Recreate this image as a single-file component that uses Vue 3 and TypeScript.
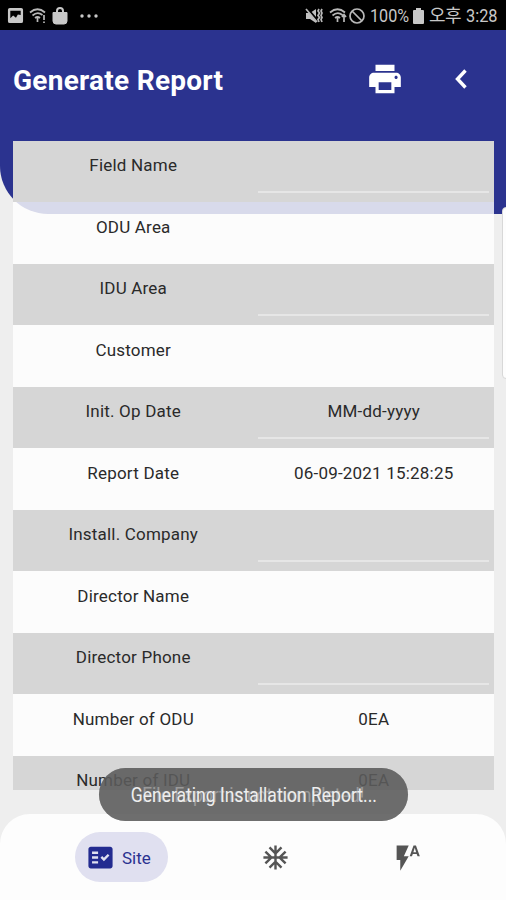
<script setup lang="ts">
interface ReportRow {
  label: string
  value?: string
  editable?: boolean
}

const rows: ReportRow[] = [
  { label: 'Field Name', editable: true },
  { label: 'ODU Area' },
  { label: 'IDU Area', editable: true },
  { label: 'Customer' },
  { label: 'Init. Op Date', value: 'MM-dd-yyyy', editable: true },
  { label: 'Report Date', value: '06-09-2021 15:28:25' },
  { label: 'Install. Company', editable: true },
  { label: 'Director Name' },
  { label: 'Director Phone', editable: true },
  { label: 'Number of ODU', value: '0EA' },
  { label: 'Number of IDU', value: '0EA' },
]
</script>

<template>
  <div class="screen">
    <div class="status">
      <div class="status-left">
        <svg class="i-image" viewBox="0 0 18 18"><path fill-rule="evenodd" d="M3 1h12a2 2 0 0 1 2 2v12a2 2 0 0 1-2 2H3a2 2 0 0 1-2-2V3a2 2 0 0 1 2-2zM3.500 4v8l3-3 3 2.500 2-3.500 3 .5V4z" /></svg>
        <svg class="i-wifi" viewBox="0 0 18 18"><path d="M1 5.500Q8.500-1 16 5.500M3.500 8.500Q8.500 4 13.500 8M6 11Q8.500 9 11 11M8.500 11v4M15 8v5M15 14.500v1.500" /></svg>
        <svg class="i-bag" viewBox="0 0 16 18"><path class="solid" d="M1 5.500h14v8.500a3 3 0 0 1-3 3H4a3 3 0 0 1-3-3z" /><path d="M5 6V4a3 3 0 0 1 6 0v2" /></svg>
        <svg class="i-dots" viewBox="0 0 18 4"><circle cx="2" cy="2" r="1.700" /><circle cx="9" cy="2" r="1.700" /><circle cx="16" cy="2" r="1.700" /></svg>
      </div>
      <div class="status-right">
        <svg class="i-mute" viewBox="0 0 18 18"><path class="solid" d="M1 6h4l6-4v14l-6-4H1z" /><path class="cut" d="M2 1l11 13" /><path d="M1 2l11 13M14 2l-1 2 1.500 2-1.500 2.500 1.500 2-1.500 2 1 2.500M17 2l-1 2 1 2-1 2.500 1 2-1 2 1 2.500" /></svg>
        <svg class="i-wifi2" viewBox="0 0 18 18"><path d="M1 5.500Q8.500-1 16 5.500M3.500 8.500Q8.500 4 13.500 8M6 11Q8.500 9 11 11M8.500 11v4M15 8v7M13 10l2-2.500 2 2.500" /></svg>
        <svg class="i-block" viewBox="0 0 18 18"><circle cx="9" cy="9" r="7" /><path d="M4 4l10 10" /></svg>
        <span class="pct">100%</span>
        <svg class="i-bat" viewBox="0 0 11 16"><path d="M3 0h5v2h2a1 1 0 0 1 1 1v12a1 1 0 0 1-1 1H1a1 1 0 0 1-1-1V3a1 1 0 0 1 1-1h2z" /></svg>
        <span class="ampm">오후</span>
        <span class="time">3:28</span>
      </div>
    </div>

    <div class="backdrop"></div>
    <header class="bar">
      <h1>Generate Report</h1>
      <svg class="printer" viewBox="0 0 24 24"><path d="M19 8H5c-1.660 0-3 1.340-3 3v6h4v4h12v-4h4v-6c0-1.660-1.340-3-3-3zm-3 11H8v-5h8v5zm3-7c-.550 0-1-.450-1-1s.450-1 1-1 1 .450 1 1-.450 1-1 1zm-1-9H6v4h12V3z" /></svg>
      <svg class="back" viewBox="0 0 12 20"><path d="M10.500 1.500L2.500 10l8 8.500" /></svg>
    </header>

    <main class="table">
      <div v-for="row in rows" :key="row.label" class="row">
        <div class="cell">{{ row.label }}</div>
        <div class="cell" :class="{ editable: row.editable }">{{ row.value }}</div>
      </div>
    </main>

    <nav class="nav">
      <div class="tab active">
        <svg viewBox="0 0 24 24"><path fill-rule="evenodd" d="M20 3H4c-1.100 0-2 .9-2 2v14c0 1.100.9 2 2 2h16c1.100 0 2-.9 2-2V5c0-1.100-.9-2-2-2zM10 17H5v-2h5v2zm0-4H5v-2h5v2zm0-4H5V7h5v2zm4.820 6L12 12.160l1.410-1.410 1.410 1.420L17.990 9l1.420 1.420L14.820 15z" /></svg>
        <span>Site</span>
      </div>
      <div class="tab flake">
        <svg viewBox="0 0 24 24"><path d="M22 11h-4.170l3.240-3.240-1.410-1.420L15 11h-2V9l4.660-4.660-1.420-1.410L13 6.170V2h-2v4.170L7.760 2.930 6.340 4.340 11 9v2H9L4.340 6.340 2.930 7.760 6.170 11H2v2h4.170l-3.240 3.240 1.410 1.420L9 13h2v2l-4.660 4.660 1.420 1.410L11 17.830V22h2v-4.170l3.240 3.240 1.420-1.410L13 15v-2h2l4.660 4.660 1.410-1.420L17.830 13H22z" /></svg>
      </div>
      <div class="tab flash">
        <svg viewBox="0 0 24 24"><path d="M3 2v12h3v9l7-12H9l4-9H3zm16 0h-2l-3.200 9h1.900l.7-2h3.200l.7 2h1.900L19 2zm-2.150 5.650L18 4l1.150 3.650h-2.300z" /></svg>
      </div>
    </nav>

    <div class="edge"></div>
    <div class="toast previous"><span>File Export is not completed!</span></div>
    <div class="toast current"><span>Generating Installation Report...</span></div>
  </div>
</template>

<style>
body {
  margin: 0;
}
</style>

<style scoped>
.screen {
  position: relative;
  width: 506px;
  height: 900px;
  overflow: hidden;
  display: flex;
  flex-direction: column;
  background: #eeeeee;
  font-family: Roboto, "Noto Sans CJK KR", sans-serif;
  color: #2a2a2a;
}
svg {
  display: block;
  flex: none;
}
.status {
  height: 30px;
  flex: none;
  box-sizing: border-box;
  background: #000;
  color: #c8c8c8;
  display: flex;
  justify-content: space-between;
  padding: 0 8px 0 7px;
}
.status-left,
.status-right {
  display: flex;
  align-items: center;
  padding-top: 1px;
}
.status svg {
  fill: #c8c8c8;
}
.i-image { width: 17px; height: 17px; }
.status .i-wifi,
.status .i-wifi2,
.status .i-block,
.status .i-mute {
  fill: none;
  stroke: #b8b8b8;
  stroke-width: 1.700;
}
.i-wifi { width: 18px; height: 18px; margin-left: 5px; }
.i-bag { width: 16px; height: 18px; margin-left: 5px; stroke: #c8c8c8; }
.i-bag path:last-child { fill: none; stroke-width: 2; }
.i-dots { width: 18px; height: 4px; margin-left: 12px; }
.i-mute { width: 18px; height: 18px; }
.i-mute .solid { fill: #c0c0c0; stroke: none; }
.i-mute .cut { stroke: #000; stroke-width: 2; }
.i-wifi2 { width: 18px; height: 18px; margin-left: 6px; }
.i-block { width: 18px; height: 18px; margin-left: 1px; }
.pct,
.time {
  font-size: 19px;
  transform-origin: left center;
  white-space: nowrap;
}
.pct { width: 40px; margin-left: 4px; transform: scaleX(0.850); }
.i-bat { width: 11px; height: 16px; margin-left: 3px; }
.ampm { width: 32px; margin-left: 5px; font-size: 18px; line-height: 20px; letter-spacing: -0.500px; white-space: nowrap; }
.time { width: 32px; margin-left: 5px; transform: scaleX(0.860); }

.backdrop {
  position: absolute;
  left: 0;
  top: 30px;
  width: 506px;
  height: 184px;
  background: #2b338f;
  border-bottom-left-radius: 48px;
}
.bar {
  position: relative;
  height: 110.500px;
  flex: none;
  box-sizing: border-box;
  display: flex;
  padding: 0 39px 0 13px;
  color: #fff;
}
h1 {
  flex: 1;
  margin: 34px 0 0;
  font-size: 28px;
  line-height: 33px;
  font-weight: 700;
  letter-spacing: 0.260px;
}
.printer { width: 38px; height: 38px; margin: 30px 51px 0 0; fill: #fff; }
.back { width: 12px; height: 20px; margin-top: 39px; fill: none; stroke: #fff; stroke-width: 3.400; }

.table {
  position: relative;
  height: 649.500px;
  flex: none;
  margin: 0 12px 0 13px;
  overflow: hidden;
}
.row {
  height: 61.550px;
  display: grid;
  grid-template-columns: 1fr 1fr;
  background: #d6d6d6;
}
.row:nth-child(even) {
  background: rgba(255, 255, 255, 0.820);
}
.cell {
  position: relative;
  padding-top: 14.500px;
  text-align: center;
  font-size: 17px;
  line-height: 20px;
  letter-spacing: 0.200px;
  white-space: nowrap;
}
.editable::after {
  content: '';
  position: absolute;
  left: 4px;
  right: 5px;
  top: 50px;
  height: 2px;
  background: #e6e6e6;
}

.nav {
  position: relative;
  height: 86px;
  flex: none;
  box-sizing: border-box;
  margin-top: auto;
  padding: 18px 0 0 75px;
  display: flex;
  background: #fdfdfd;
  border-radius: 30px 30px 0 0;
}
.tab {
  height: 50px;
  display: flex;
  align-items: center;
}
.tab svg { width: 29px; height: 29px; fill: #555; }
.tab.active {
  width: 93px;
  box-sizing: border-box;
  padding-left: 11px;
  border-radius: 25px;
  background: #e0e0f0;
  color: #2b3290;
  font-size: 17px;
}
.active svg { margin-right: 7px; fill: #232b90; }
.active span { padding-top: 1px; }
.flake { margin-left: 93px; }
.flash { margin-left: 103px; }

.edge {
  position: absolute;
  left: 502px;
  top: 207px;
  width: 8px;
  height: 170px;
  background: #fdfdfd;
  border: 1px solid #d8d8d8;
  border-radius: 4px;
}
.toast {
  position: absolute;
  left: 99px;
  top: 768px;
  width: 309px;
  height: 53px;
  border-radius: 27px;
  display: flex;
  align-items: center;
  justify-content: center;
  font-size: 19.500px;
  white-space: nowrap;
}
.toast span {
  transform: translateY(1px) scaleX(0.900);
}
.previous {
  background: rgba(90, 90, 90, 0.700);
  color: #fff;
}
.current {
  background: rgba(92, 92, 92, 0.620);
  color: #eee;
}
</style>
